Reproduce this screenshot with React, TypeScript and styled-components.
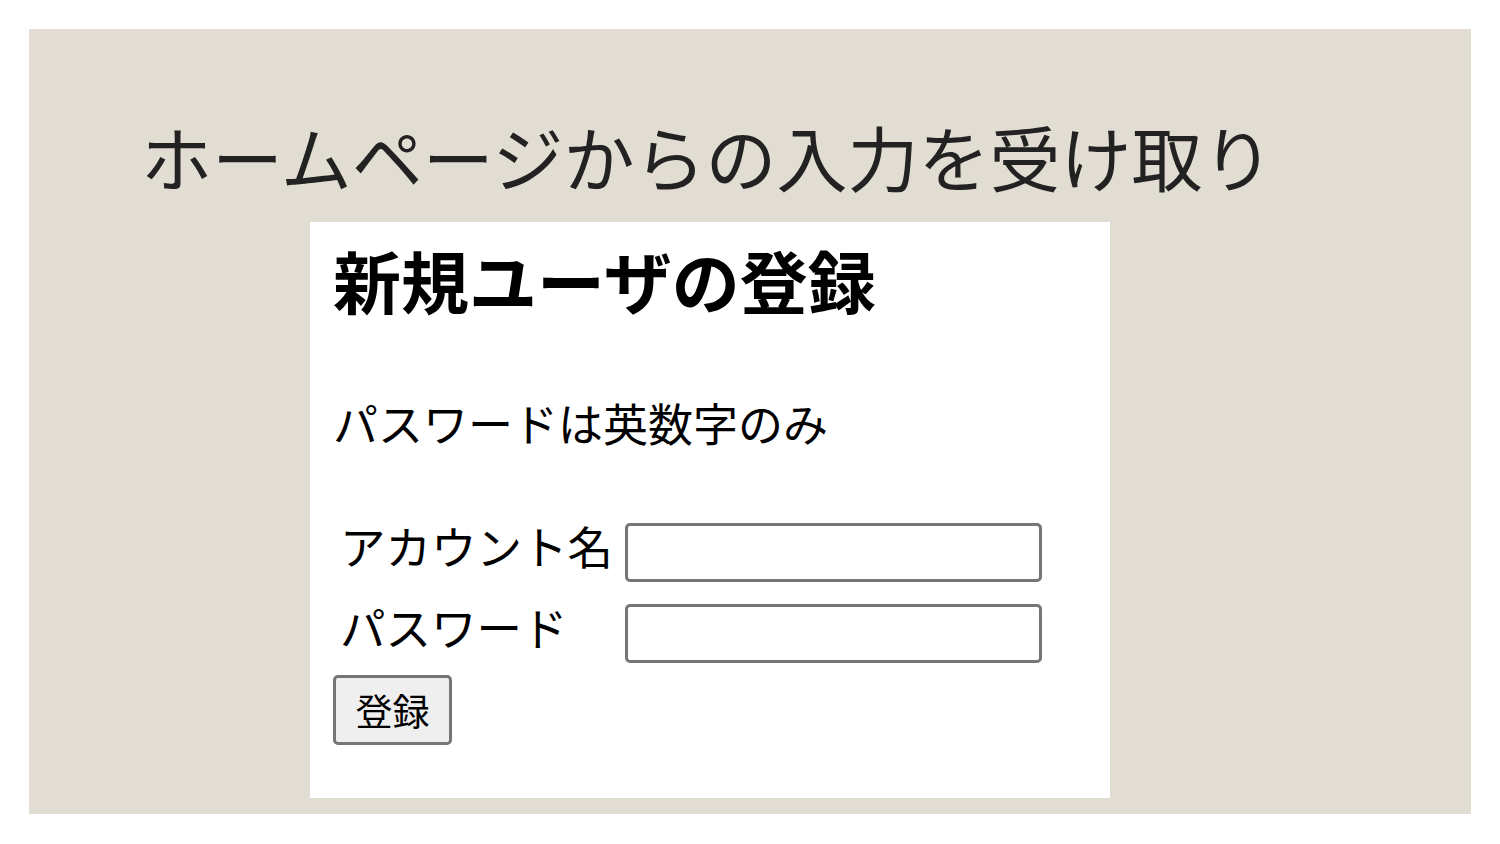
import React from 'react';
import styled, { createGlobalStyle } from 'styled-components';

const GlobalStyle = createGlobalStyle`
    html, body {
        margin: 0;
        padding: 0;
        background: #ffffff;
    }
    body {
        font-family: "Noto Sans CJK JP", "Noto Sans", sans-serif;
    }
`;

export const Page = styled.div`
    width: 1500px;
    height: 844px;
    padding: 29px;
    box-sizing: border-box;
`;

export const Slide = styled.div`
    width: 1442px;
    height: 785px;
    background: #e2ddd3;
    display: flex;
    flex-direction: column;
    padding: 91px 0 0 112px;
    box-sizing: border-box;
`;

export const Title = styled.h1`
    margin: 0;
    font-size: 71px;
    line-height: 71px;
    font-weight: 400;
    color: #222222;
    white-space: nowrap;
`;

export const Panel = styled.div`
    margin: 31px 0 0 169px;
    width: 800px;
    height: 576px;
    background: #ffffff;
    padding: 17px 23px 0;
    box-sizing: border-box;
    color: #000;
`;

export const Heading = styled.h2`
    margin: 0;
    font-size: 68px;
    line-height: 82px;
    font-weight: 700;
`;

export const Note = styled.p`
    margin: 71px 0 0;
    font-size: 45px;
    line-height: 62px;
`;

export const FormTable = styled.table`
    margin-top: 57px;
    border-spacing: 2px;
    border-collapse: separate;
`;

export const LabelCell = styled.td`
    padding: 1px 10px 15px 5px;
    font-size: 45.5px;
    line-height: 63px;
    white-space: nowrap;
    vertical-align: middle;
`;

export const FieldCell = styled.td`
    padding: 0;
    vertical-align: middle;
`;

export const TextInput = styled.input`
    display: block;
    width: 417px;
    height: 59px;
    box-sizing: border-box;
    border: 3px solid #767676;
    border-radius: 5px;
    background: #fff;
    font-size: 40px;
    padding: 0 8px;
`;

export const Button = styled.button`
    width: 119px;
    height: 70px;
    box-sizing: border-box;
    background: #efefef;
    border: 3px solid #767676;
    border-radius: 5px;
    font-family: "Noto Sans CJK JP", sans-serif;
    font-size: 37px;
    color: #000;
    padding: 0;
    display: flex;
    align-items: center;
    justify-content: center;
`;

const App: React.FC = () => {
    return (
        <>
            <GlobalStyle />
            <Page>
                <Slide>
                    <Title>ホームページからの入力を受け取り</Title>
                    <Panel>
                        <Heading>新規ユーザの登録</Heading>
                        <Note>パスワードは英数字のみ</Note>
                        <FormTable>
                            <tbody>
                                <tr>
                                    <LabelCell>アカウント名</LabelCell>
                                    <FieldCell><TextInput type="text" /></FieldCell>
                                </tr>
                                <tr>
                                    <LabelCell>パスワード</LabelCell>
                                    <FieldCell><TextInput type="password" /></FieldCell>
                                </tr>
                            </tbody>
                        </FormTable>
                        <Button type="button">登録</Button>
                    </Panel>
                </Slide>
            </Page>
        </>
    );
};

export default App;
